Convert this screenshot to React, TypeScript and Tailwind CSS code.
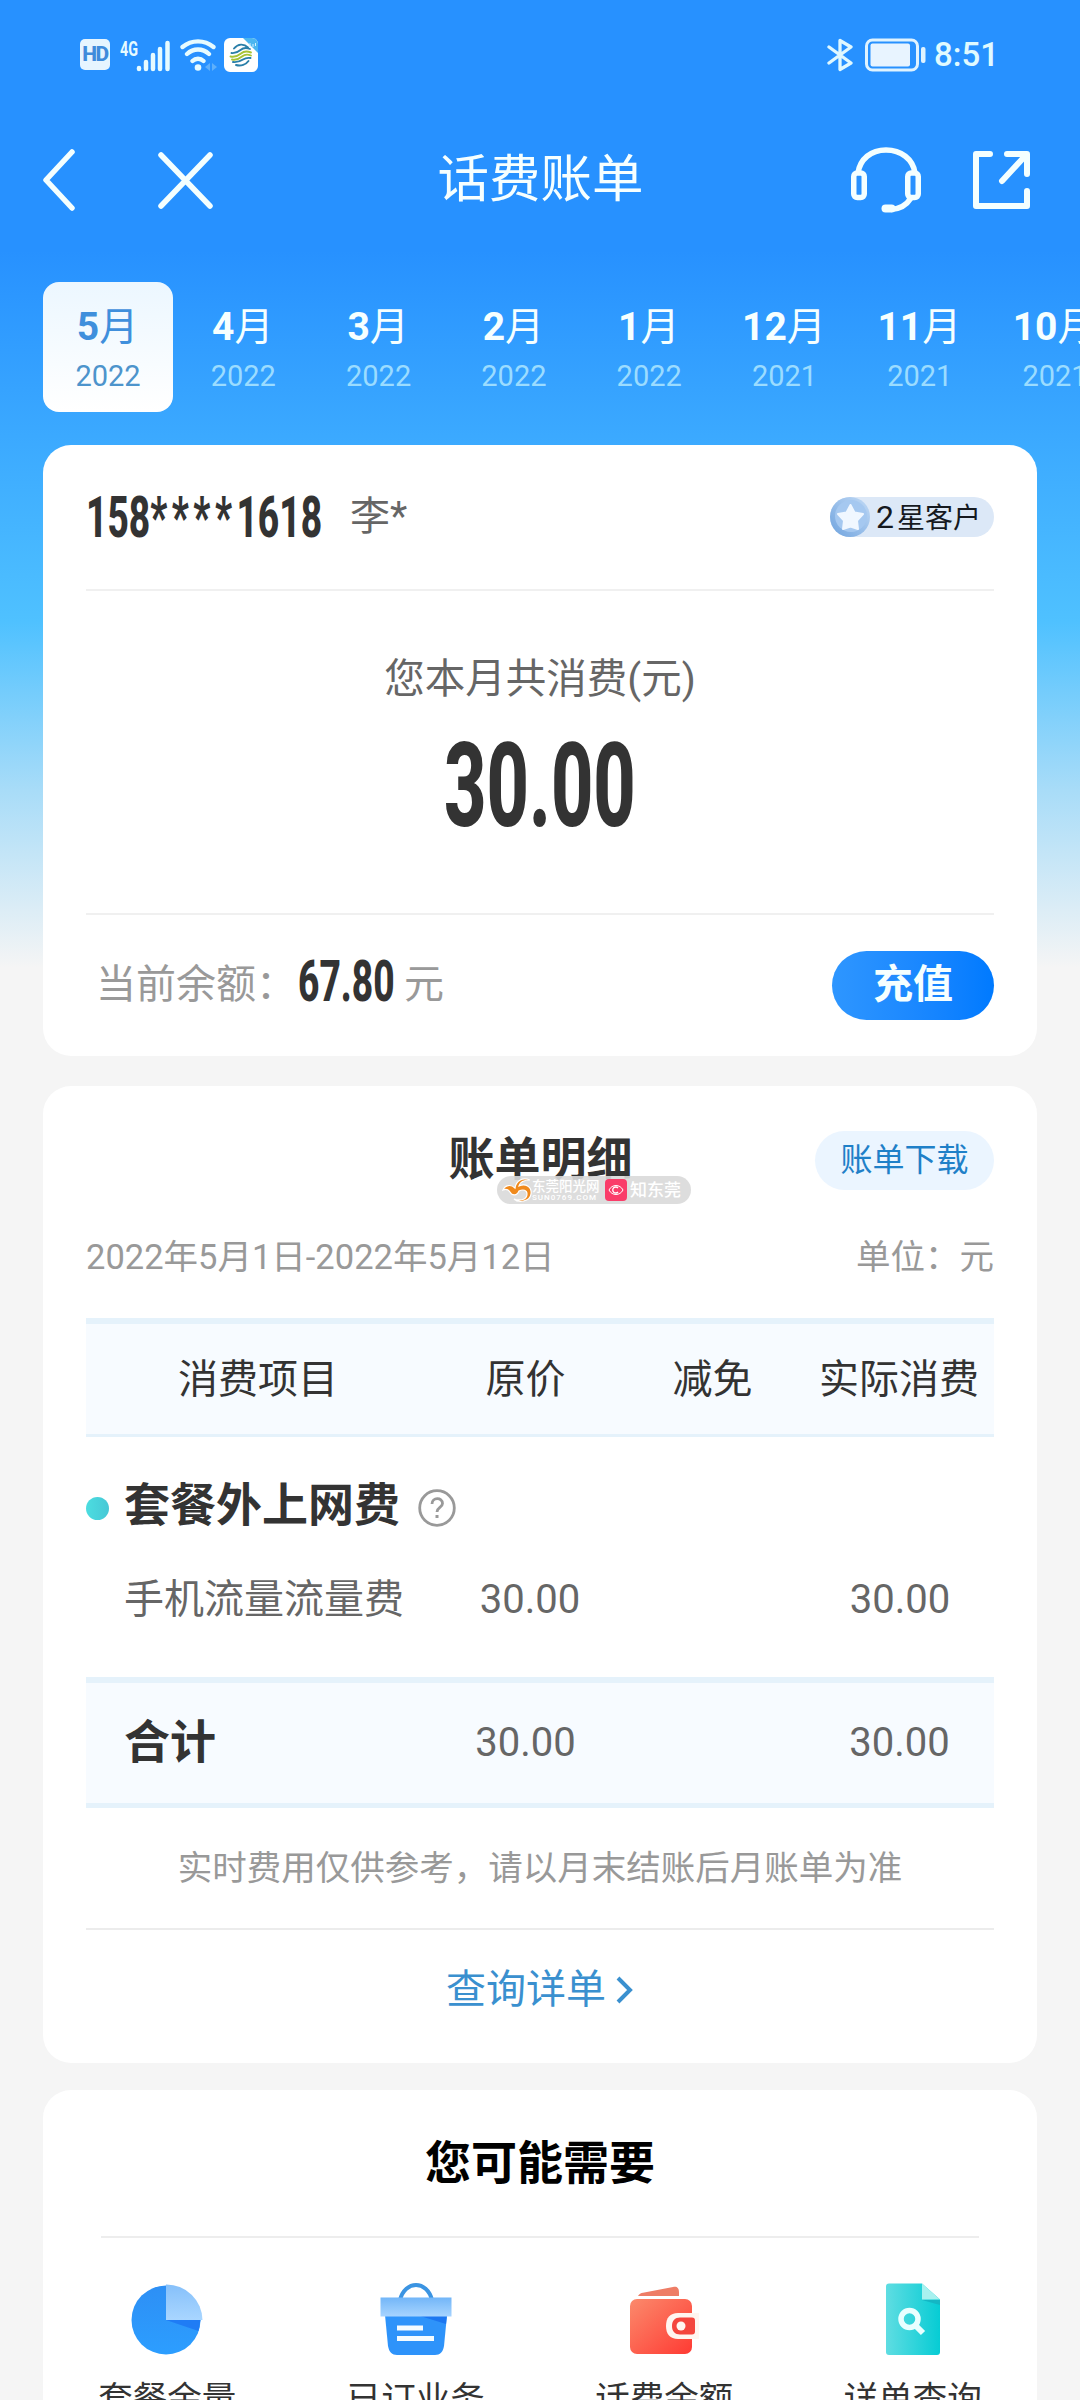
import type { ReactNode } from "react";

const months = [
	{ month: "5", year: "2022" },
	{ month: "4", year: "2022" },
	{ month: "3", year: "2022" },
	{ month: "2", year: "2022" },
	{ month: "1", year: "2022" },
	{ month: "12", year: "2021" },
	{ month: "11", year: "2021" },
	{ month: "10", year: "2021" },
];

const StatusBar = () => {
	return (
		<div className="flex h-[109px] items-center justify-between pl-20 pr-[81px]">
			<div className="flex items-center">
				<div className="flex h-[31px] w-[30px] items-center justify-center rounded-[5px] bg-[#e6f5ff] text-[21px] font-extrabold leading-none tracking-[-1.500px] text-[#3f8bdb]">
					HD
				</div>
				<svg className="ml-[10px]" width="52" height="38" viewBox="0 0 52 38" fill="none">
					<text x="0" y="20" fontSize="20" fontWeight="700" fill="#e6fbff" textLength="18" lengthAdjust="spacingAndGlyphs">
						4G
					</text>
					<g stroke="#e6fbff" strokeWidth="4.500" strokeLinecap="round">
						<path d="M19 32v1M26 26v7M33 19v14M40 13v20M47.500 7v26" />
					</g>
				</svg>
				<svg className="ml-[8px]" width="38" height="34" viewBox="0 0 38 34" fill="none">
					<g stroke="#e6fbff" strokeWidth="4.300" strokeLinecap="round">
						<path d="M2.500 9c9-7.500 22-7.500 31 0M7 16c6.500-6 15.500-6 22 0M12.500 23c3-3 8-3 11 0" />
					</g>
					<circle cx="18" cy="29.500" r="3.300" fill="#e6fbff" />
					<path d="M30 25v8l-5-4zM32 25l5 4-5 4z" fill="#5fb0fb" />
				</svg>
				<svg className="ml-[6px]" width="34" height="34" viewBox="0 0 34 34" fill="none">
					<rect width="34" height="34" rx="6" fill="#fff" />
					<path d="M19 0h9a6 6 0 0 1 6 6v9z" fill="#4bb6f0" />
					<path d="M26 5v4M29 6v3M31.500 5v3" stroke="#d5f1ff" strokeWidth="1" />
					<g strokeWidth="1.900" strokeLinecap="round">
						<path d="M10 10.500c4-5 10-5 14-1" stroke="#2a7fa8" />
						<path d="M7.500 15c4 .5 6-.5 9-3s6-2.500 9.500-1" stroke="#2a7fa8" />
						<path d="M6.500 18.500c4.500 1 7.500-.5 10.500-3s6-2.500 10-1" stroke="#a7c335" />
						<path d="M8 21.500c4.500 1 7-.5 10-3s5.500-2.500 9-1" stroke="#a7c335" />
						<path d="M9 24c4 .5 7-.5 10-2.500s4.500-2 7.500-1.500" stroke="#2a7fa8" />
						<path d="M12 27c5 1.500 10-.5 12.500-4" stroke="#2a7fa8" />
					</g>
				</svg>
			</div>
			<div className="flex items-center">
				<svg width="26" height="34" viewBox="0 0 26 34" fill="none" stroke="#dff8ff" strokeWidth="3.300" strokeLinecap="round" strokeLinejoin="round">
					<path d="M2 9l22 16-11 6.500V2.500L24 9 2 25" />
				</svg>
				<svg className="ml-[12px]" width="61" height="34" viewBox="0 0 61 34" fill="none">
					<rect x="1.500" y="2" width="51" height="30" rx="6" stroke="#dff3ff" strokeWidth="3" />
					<rect x="5.500" y="5.500" width="39.500" height="23" rx="2" fill="#e8f4ff" />
					<rect x="56" y="9" width="4.500" height="16" rx="2" fill="#dff3ff" />
				</svg>
				<span className="ml-[8px] text-[33px] font-medium leading-none text-[#e0faff]">8:51</span>
			</div>
		</div>
	);
};

const NavBar = () => {
	return (
		<div className="grid h-[142px] grid-cols-[1fr_auto_1fr] items-center pl-[42px] pr-[50px]">
			<div className="flex items-center gap-[83px]">
				<svg width="33" height="62" viewBox="0 0 33 62" fill="none" stroke="#f4ffff" strokeWidth="5.500" strokeLinecap="round" strokeLinejoin="round">
					<path d="M30 3L4 31l26 28" />
				</svg>
				<svg width="55" height="57" viewBox="0 0 55 57" fill="none" stroke="#f4ffff" strokeWidth="5.500" strokeLinecap="round">
					<path d="M3 3l49 51M52 3L3 54" />
				</svg>
			</div>
			<h1 className="ml-[9px] text-[51.500px] leading-none text-[#f6ffff]">话费账单</h1>
			<div className="flex items-center justify-end gap-[52px]">
				<svg width="70" height="66" viewBox="0 0 70 66" fill="none" stroke="#f4ffff" strokeWidth="5.500" strokeLinejoin="round">
					<path d="M7 26C9 12 20 3 35 3s27 9 29 23" />
					<rect x="2.750" y="26" width="10.500" height="24.500" rx="3.500" />
					<rect x="56.750" y="26" width="10.500" height="24.500" rx="3.500" />
					<path d="M60 51c-5 8-12 11-20 11.500" />
					<path d="M34.500 61.500h6" strokeWidth="8" strokeLinecap="round" />
				</svg>
				<svg width="57" height="58" viewBox="0 0 57 58" fill="none" stroke="#f4ffff" strokeWidth="6" strokeLinecap="round" strokeLinejoin="round">
					<path d="M17 3H3v52h51V40M34 3h20v20M53 4L29 30" />
				</svg>
			</div>
		</div>
	);
};

const MonthTabs = () => {
	return (
		<div className="mt-[31px] flex h-[130px] w-[1200px] gap-[5.300px] pl-[43px]">
			{months.map((item, index) => (
				<div
					key={item.month}
					className={
						index === 0
							? "flex w-[130px] shrink-0 flex-col items-center rounded-2xl bg-linear-to-b from-[#ecf7ff] to-white pt-[21px] text-[#3f8fdc]"
							: "flex w-[130px] shrink-0 flex-col items-center pt-[21px] text-[#f6ffff]"
					}
				>
					<div className="mr-px text-[39px] leading-[48px]">
						<span className="font-bold">{item.month}</span>月
					</div>
					<div
						className={
							index === 0 ? "mt-px text-[29px] leading-[48px] text-[#4d94cc]" : "mt-px text-[29px] leading-[48px] text-[#9bdcff]"
						}
					>
						{item.year}
					</div>
				</div>
			))}
		</div>
	);
};

const StarBadge = () => {
	return (
		<div className="flex h-10 w-[164px] items-center rounded-full bg-[#dce8f7]">
			<svg width="40" height="40" viewBox="0 0 40 40">
				<defs>
					<linearGradient id="star-ring" x1="0" y1="1" x2="1" y2="0">
						<stop offset="0" stopColor="#6fa3de" />
						<stop offset="1" stopColor="#c3dbf6" />
					</linearGradient>
				</defs>
				<circle cx="20" cy="20" r="20" fill="url(#star-ring)" />
				<circle cx="21" cy="19" r="16" fill="#a5c8f0" />
				<path d="M20.500 8l4 7.500 8.500 1.500-6 6.500 1 8.500-7.500-2.500-7.500 2.500 1-8.500-6-6.500 8.500-1.500z" fill="#f0f7ff" stroke="#f0f7ff" strokeWidth="2" strokeLinejoin="round" />
			</svg>
			<span className="ml-[6px] whitespace-nowrap text-[28px] leading-none text-[#15191f]">
				<span className="mr-[3px] text-[32px]">2</span>星客户
			</span>
		</div>
	);
};

const SummaryCard = () => {
	return (
		<section className="mx-[43px] mt-[33px] h-[611px] rounded-[28px] bg-white px-[43px]">
			<div className="flex h-[144px] items-center justify-between">
				<div className="flex items-center">
					<div className="h-[60px] w-[264px] whitespace-nowrap text-[58px] font-extrabold leading-[60px] text-[#333]">
						<span className="inline-block origin-left scale-x-[0.640]">
							158<span className="tracking-[7px]">****</span>1618
						</span>
					</div>
					<span className="text-[40px] leading-none text-[#666]">李*</span>
				</div>
				<StarBadge />
			</div>
			<div className="flex h-[326px] flex-col items-center border-y-2 border-[#f0f0f0] pt-[62px]">
				<div className="text-[40.500px] leading-[52px] text-[#666]">您本月共消费(元)</div>
				<div className="mt-[22px] flex h-[118px] w-[200px] justify-center text-[116px] font-extrabold leading-[118px] text-[#333]">
					<span className="scale-x-[0.635]">30.00</span>
				</div>
			</div>
			<div className="flex h-[140px] items-center justify-between">
				<div className="flex items-center pl-[10px] text-[40px] leading-none text-[#999]">
					<span className="w-[202px]">当前余额：</span>
					<span className="mb-[8px] h-[60px] w-[106px] whitespace-nowrap text-[58px] font-extrabold leading-[60px] text-[#333]">
						<span className="inline-block origin-left scale-x-[0.640]">67.80</span>
					</span>
					<span>元</span>
				</div>
				<button className="h-[69px] w-[162px] rounded-full bg-linear-to-r from-[#2e96ff] to-[#007aff] text-[40px] font-bold leading-none text-[#f6ffff]">
					充值
				</button>
			</div>
		</section>
	);
};

const Watermark = () => {
	return (
		<div className="absolute left-[411px] top-[45px] flex h-[28px] w-[194px] items-center rounded-full bg-[#d9d9d9]/90 pl-[5px]">
			<svg width="30" height="26" viewBox="0 0 30 26">
				<g stroke="#fff" strokeWidth="1.200" fill="#f08a1d">
					<path d="M1 13c2-5 8-6 12-2C14 4 20 0 28 3c-6 0-10 2-11 6 7-3 13 1 12 8-1 8-13 9-17 5 6 2 13 1 13-5 0-4-4-5-8-3-2 5-7 5-9 1-2-3-5-3-7-2z" />
				</g>
			</svg>
			<div className="w-[70px] whitespace-nowrap text-white">
				<div className="text-[13.500px] font-medium leading-[15px]">东莞阳光网</div>
				<div className="text-[8px] font-medium leading-[8px] tracking-[1px]">SUN0769.COM</div>
			</div>
			<svg className="ml-[3px]" width="22" height="26" viewBox="0 0 22 26" fill="none">
				<rect y="2" width="22" height="22" rx="4" fill="#fa3c69" />
				<path d="M4 13c3-6 11-6 14 0-3 6-11 6-14 0z" stroke="#fff" strokeWidth="1" />
				<path d="M13 11a3 3 0 1 0 0 4" stroke="#fff" strokeWidth="1.300" />
			</svg>
			<div className="ml-[3px] whitespace-nowrap text-[17px] font-medium leading-none text-white">知东莞</div>
		</div>
	);
};

const TableBand = ({ children, className }: { children: ReactNode; className: string }) => {
	return (
		<div className={`grid grid-cols-[344px_191px_183px_1fr] items-center border-t-[6px] border-[#e5f2fb] bg-[#f7fbff] text-[40px] leading-none ${className}`}>
			{children}
		</div>
	);
};

const DetailCard = () => {
	return (
		<section className="mx-[43px] mt-[30px] h-[977px] rounded-[28px] bg-white px-[43px] pt-[45px]">
			<div className="relative grid h-[59px] grid-cols-[1fr_auto_1fr] items-center">
				<h2 className="col-start-2 mb-[4px] ml-px text-[46px] font-bold leading-none text-[#333]">账单明细</h2>
				<button className="h-[59px] w-[179px] justify-self-end rounded-full bg-[#ebf5ff] pb-[2px] text-[32px] leading-none text-[#1f80c8]">账单下载</button>
				<Watermark />
			</div>
			<div className="mt-[41px] flex h-[52px] items-center justify-between text-[34.500px] leading-none text-[#999]">
				<span>2022年5月1日-2022年5月12日</span>
				<span>单位：元</span>
			</div>
			<TableBand className="mt-[35px] h-[119px] border-b-[3px] pt-px text-center text-[#333]">
				<span>消费项目</span>
				<span>原价</span>
				<span>减免</span>
				<span className="-mx-2">实际消费</span>
			</TableBand>
			<div className="mt-[38px] flex h-[60px] items-center">
				<span className="mt-[6px] h-[23px] w-[23px] rounded-full bg-linear-to-r from-[#4cdde0] to-[#46c8d6]" />
				<span className="ml-[15px] text-[46px] font-bold leading-none text-[#333]">套餐外上网费</span>
				<svg className="ml-[18px] mt-[6px]" width="38" height="38" viewBox="0 0 38 38" fill="none" stroke="#999">
					<circle cx="19" cy="19" r="17.300" strokeWidth="2.800" />
					<path d="M14 15c0-7 10.500-7 10.500-.5 0 4-5.500 4-5.500 8.500" strokeWidth="2.800" />
					<path d="M19 26v3" strokeWidth="3" />
				</svg>
			</div>
			<div className="mt-[35px] grid h-[60px] grid-cols-[344px_200px_174px_1fr] items-center text-center text-[40px] leading-none text-[#666]">
				<span className="pl-[38px] text-left">手机流量流量费</span>
				<span>30.00</span>
				<span />
				<span className="-mr-[6px] ml-[-4px]">30.00</span>
			</div>
			<TableBand className="mt-[47px] h-[131px] border-b-[5px] text-center text-[#666]">
				<span className="mb-[3px] pl-[38px] text-left text-[46px] font-bold text-[#333]">合计</span>
				<span>30.00</span>
				<span />
				<span className="-mr-[6px] ml-[-5px]">30.00</span>
			</TableBand>
			<p className="flex h-[122px] items-center justify-center border-b-2 border-[#ececec] text-[34.500px] leading-none text-[#999]">
				实时费用仅供参考，请以月末结账后月账单为准
			</p>
			<a className="flex h-[119px] items-center justify-center gap-[10px] text-[40px] leading-none text-[#3a90cf]">
				查询详单
				<svg width="18" height="30" viewBox="0 0 18 30" fill="none" stroke="#3a90cf" strokeWidth="4">
					<path d="M2 3l12 12L2 27" />
				</svg>
			</a>
		</section>
	);
};

const PieIcon = () => {
	return (
		<svg width="74" height="74" viewBox="0 0 74 74">
			<defs>
				<linearGradient id="pie" x1="0" y1="0" x2="0" y2="1">
					<stop offset="0" stopColor="#2d8ff5" />
					<stop offset="1" stopColor="#2c9eff" />
				</linearGradient>
				<linearGradient id="pie-slice" x1="0" y1="0" x2="0" y2="1">
					<stop offset="0" stopColor="#86c0fa" />
					<stop offset="1" stopColor="#a9d6ff" />
				</linearGradient>
			</defs>
			<circle cx="36" cy="38" r="34.500" fill="url(#pie)" />
			<path d="M36 38h34.500l-2 11z" fill="#1f7cf5" />
			<path d="M36 2.500A36 36 0 0 1 72.500 38H36z" fill="url(#pie-slice)" />
		</svg>
	);
};

const BagIcon = () => {
	return (
		<svg width="74" height="74" viewBox="0 0 74 74">
			<defs>
				<linearGradient id="bag-lid" x1="0" y1="0" x2="0" y2="1">
					<stop offset="0" stopColor="#72b6f8" />
					<stop offset="1" stopColor="#a7d4ff" />
				</linearGradient>
			</defs>
			<path d="M21 18c5-20 27-20 32 0" fill="none" stroke="#3b94e2" strokeWidth="4" />
			<path d="M6 33h62l-3 31c-1 6-4 9-9 9H18c-5 0-8-3-9-9z" fill="#2e93fa" />
			<path d="M38 33h30l-1 9z" fill="#1c76f0" />
			<path d="M1.500 15.500h71v19h-71z" fill="url(#bag-lid)" />
			<path d="M18 46h26M18 56.500h37" stroke="#f4fbff" strokeWidth="5" />
		</svg>
	);
};

const WalletIcon = () => {
	return (
		<svg width="74" height="74" viewBox="0 0 74 74">
			<defs>
				<linearGradient id="wallet" x1="0" y1="0" x2="1" y2="1">
					<stop offset="0" stopColor="#fb8a6c" />
					<stop offset="1" stopColor="#ff3a33" />
				</linearGradient>
			</defs>
			<path d="M11 14c1-2 3-3 5-3.300L46 5c4-1 6 1 6 5v4z" fill="#ee7d66" />
			<rect x="3" y="17" width="62" height="55" rx="7" fill="url(#wallet)" />
			<path d="M72 31H51c-8 0-12 5-12 13s4 13 12 13h21z" fill="#fff5f0" />
			<path d="M65 35.500H53c-5 0-8 3-8 8.500s3 8.500 8 8.500h12c2 0 3-1 3-3v-11c0-2-1-3-3-3z" fill="#f4453d" />
			<circle cx="54" cy="44" r="4.500" fill="#fff5f0" />
		</svg>
	);
};

const DocIcon = () => {
	return (
		<svg width="74" height="74" viewBox="0 0 74 74">
			<defs>
				<linearGradient id="doc" x1="0" y1="0" x2="1" y2="0">
					<stop offset="0" stopColor="#5fdde2" />
					<stop offset="1" stopColor="#06ccd4" />
				</linearGradient>
			</defs>
			<path d="M13 1.500h33l18 16V70a3 3 0 0 1-3 3H13a3 3 0 0 1-3-3V4.500a3 3 0 0 1 3-3z" fill="url(#doc)" />
			<path d="M46 18h18v5z" fill="#14b6c4" />
			<path d="M46 1.500l18 16H46z" fill="#a8f1ef" />
			<circle cx="33.500" cy="37" r="8.500" fill="none" stroke="#e9ffff" strokeWidth="5.500" />
			<path d="M39 43l8 8" stroke="#e9ffff" strokeWidth="6" />
		</svg>
	);
};

const NeedsCard = () => {
	const items = [
		{ label: "套餐余量", icon: <PieIcon /> },
		{ label: "已订业务", icon: <BagIcon /> },
		{ label: "话费余额", icon: <WalletIcon /> },
		{ label: "详单查询", icon: <DocIcon /> },
	];

	return (
		<section className="mx-[43px] mt-[27px] h-[420px] rounded-t-[28px] bg-white">
			<h2 className="flex h-[146px] items-center justify-center text-[46px] font-bold leading-none text-black">您可能需要</h2>
			<div className="mx-[58px] border-t-2 border-[#ededed]" />
			<div className="mt-[44px] grid grid-cols-4">
				{items.map((item) => (
					<div key={item.label} className="flex flex-col items-center">
						{item.icon}
						<span className="mt-[21px] text-[34.500px] leading-[44px] text-[#333]">{item.label}</span>
					</div>
				))}
			</div>
		</section>
	);
};

export default function App() {
	return (
		<div className="h-[2400px] w-[1080px] overflow-hidden bg-[#f5f5f5] bg-[linear-gradient(180deg,#2791ff_0px,#2791ff_250px,#4fc1ff_622px,#a8dcf8_790px,#f5f5f5_968px)] font-[Roboto,'Noto_Sans_CJK_SC',sans-serif]">
			<StatusBar />
			<NavBar />
			<MonthTabs />
			<SummaryCard />
			<DetailCard />
			<NeedsCard />
		</div>
	);
}
